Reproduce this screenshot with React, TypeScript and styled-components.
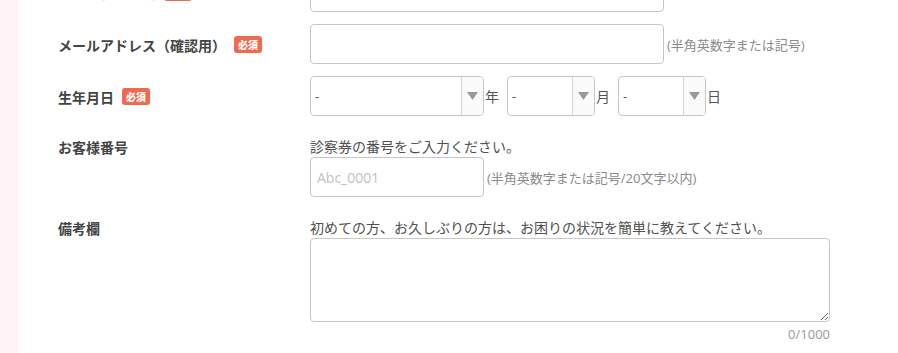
import React, { useState } from "react";
import styled, { createGlobalStyle } from "styled-components";

const GlobalStyle = createGlobalStyle`
  body {
    margin: 0;
    background: #ffffff;
    font-family: "Noto Sans CJK JP", "Noto Sans", sans-serif;
    color: #444;
  }
`;

type SelectPropsType = {
  width: number;
  options: string[];
};

const DateSelect = (props: SelectPropsType) => {
  const [value, setValue] = useState(props.options[0]);
  return (
    <StyledSelectBox $width={props.width}>
      <StyledSelect value={value} onChange={(e) => setValue(e.target.value)}>
        {props.options.map((o) => (
          <option key={o} value={o}>
            {o}
          </option>
        ))}
      </StyledSelect>
      <StyledArrowCell>
        <svg width="11" height="8" viewBox="0 0 11 8">
          <path d="M0 0 L11 0 L5.5 8 Z" fill="#999" />
        </svg>
      </StyledArrowCell>
    </StyledSelectBox>
  );
};

const range = (from: number, to: number) => {
  const list = ["-"];
  for (let i = from; i <= to; i++) list.push(String(i));
  return list;
};

export default function App() {
  const [memo, setMemo] = useState("");

  return (
    <StyledPage>
      <GlobalStyle />
      <StyledSideStrip />
      <StyledForm>
        <StyledRow $gap={12}>
          <StyledLabel $inline>
            メールアドレス<StyledBadge>必須</StyledBadge>
          </StyledLabel>
          <StyledField>
            <StyledLine>
              <StyledInput $width={354} type="email" />
            </StyledLine>
          </StyledField>
        </StyledRow>

        <StyledRow $gap={12}>
          <StyledLabel $inline>
            メールアドレス（確認用）<StyledBadge>必須</StyledBadge>
          </StyledLabel>
          <StyledField>
            <StyledLine>
              <StyledInput $width={354} type="email" />
              <StyledNote>(半角英数字または記号)</StyledNote>
            </StyledLine>
          </StyledField>
        </StyledRow>

        <StyledRow $gap={20}>
          <StyledLabel $inline>
            生年月日<StyledBadge>必須</StyledBadge>
          </StyledLabel>
          <StyledField>
            <StyledLine>
              <DateSelect width={174} options={range(1920, 2024)} />
              <StyledUnit>年</StyledUnit>
              <DateSelect width={88} options={range(1, 12)} />
              <StyledUnit>月</StyledUnit>
              <DateSelect width={88} options={range(1, 31)} />
              <StyledUnit>日</StyledUnit>
            </StyledLine>
          </StyledField>
        </StyledRow>

        <StyledRow $gap={20}>
          <StyledLabel>お客様番号</StyledLabel>
          <StyledField>
            <StyledHelp>診察券の番号をご入力ください。</StyledHelp>
            <StyledLine>
              <StyledInput $width={174} type="text" placeholder="Abc_0001" />
              <StyledNote>(半角英数字または記号/20文字以内)</StyledNote>
            </StyledLine>
          </StyledField>
        </StyledRow>

        <StyledRow $gap={0}>
          <StyledLabel>備考欄</StyledLabel>
          <StyledField>
            <StyledHelp>
              初めての方、お久しぶりの方は、お困りの状況を簡単に教えてください。
            </StyledHelp>
            <StyledTextarea
              value={memo}
              maxLength={1000}
              onChange={(e) => setMemo(e.target.value)}
            />
            <StyledCounter>{memo.length}/1000</StyledCounter>
          </StyledField>
        </StyledRow>
      </StyledForm>
    </StyledPage>
  );
}

const StyledPage = styled.div`
  display: flex;
  min-height: 353px;
  overflow: hidden;
`;

const StyledSideStrip = styled.div`
  width: 18px;
  flex-shrink: 0;
  background: #fff3f7;
`;

const StyledForm = styled.div`
  flex: 1;
  display: flex;
  flex-direction: column;
  margin-top: -28px;
  padding-left: 40px;
`;

const StyledRow = styled.div<{ $gap: number }>`
  display: grid;
  grid-template-columns: 252px 1fr;
  margin-bottom: ${(p) => p.$gap}px;
`;

const StyledLabel = styled.div<{ $inline?: boolean }>`
  display: flex;
  align-items: center;
  align-self: start;
  height: 21px;
  margin-top: ${(p) => (p.$inline ? "10px" : "0")};
  font-size: 14px;
  font-weight: bold;
  color: #444;
  white-space: nowrap;
`;

const StyledBadge = styled.span`
  display: inline-flex;
  align-items: center;
  justify-content: center;
  width: 28px;
  height: 17px;
  margin-left: 8px;
  border-radius: 3px;
  background: #ef6b4f;
  color: #fff;
  font-size: 10px;
  font-weight: 900;
  line-height: 1;
`;

const StyledField = styled.div`
  display: flex;
  flex-direction: column;
  align-items: flex-start;
`;

const StyledLine = styled.div`
  display: flex;
  align-items: center;
`;

const StyledHelp = styled.p`
  margin: 0;
  font-size: 14px;
  line-height: 21px;
  color: #505050;
  white-space: nowrap;
`;

const StyledInput = styled.input<{ $width: number }>`
  box-sizing: border-box;
  width: ${(p) => p.$width}px;
  height: 40px;
  padding: 0 6px;
  border: 1px solid #c6c6c6;
  border-radius: 4px;
  background: #fff;
  font-family: "Open Sans", "Noto Sans CJK JP", sans-serif;
  font-size: 14px;
  color: #444;
  outline: none;

  &::placeholder {
    color: #c0c0c0;
  }
`;

const StyledNote = styled.span`
  margin-left: 3px;
  font-family: "Open Sans", "Noto Sans CJK JP", sans-serif;
  font-size: 13px;
  color: #8a8a8a;
  white-space: nowrap;
`;

const StyledSelectBox = styled.div<{ $width: number }>`
  box-sizing: border-box;
  display: flex;
  width: ${(p) => p.$width}px;
  height: 40px;
  border: 1px solid #c6c6c6;
  border-radius: 4px;
  background: #fff;
  overflow: hidden;
`;

const StyledSelect = styled.select`
  flex: 1;
  min-width: 0;
  appearance: none;
  border: none;
  background: transparent;
  padding: 0 4px;
  font-family: "Open Sans", "Noto Sans CJK JP", sans-serif;
  font-size: 13px;
  color: #555;
  outline: none;
`;

const StyledArrowCell = styled.div`
  width: 21px;
  display: flex;
  align-items: center;
  justify-content: center;
  border-left: 1px solid #d6d6d6;
  background: #fafafa;
`;

const StyledUnit = styled.span`
  margin: 0 8px 0 1px;
  font-size: 14px;
  color: #555;
`;

const StyledTextarea = styled.textarea`
  box-sizing: border-box;
  width: 520px;
  height: 84px;
  border: 1px solid #c6c6c6;
  border-radius: 4px;
  padding: 6px;
  font-family: "Noto Sans CJK JP", sans-serif;
  font-size: 13px;
  color: #444;
  outline: none;
`;

const StyledCounter = styled.div`
  width: 520px;
  margin-top: 3px;
  text-align: right;
  font-family: "Open Sans", sans-serif;
  font-size: 13px;
  color: #999;
`;
